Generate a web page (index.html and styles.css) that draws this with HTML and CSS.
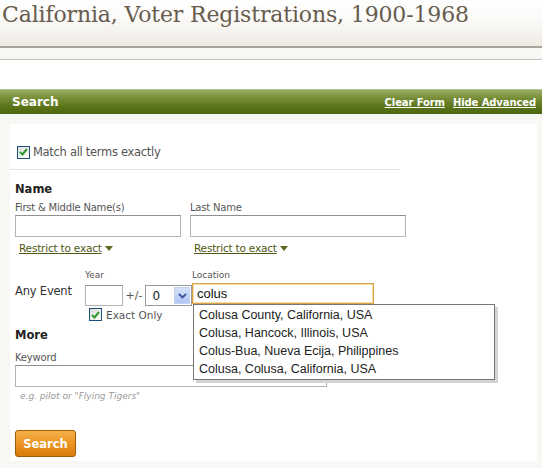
FILE: index.html
```html
<!DOCTYPE html>
<html>
<head>
<meta charset="utf-8">
<link rel="stylesheet" href="styles.css">
</head>
<body>
<div class="masthead">
  <h1 class="title">California, Voter Registrations, 1900-1968</h1>
</div>
<div class="substrip"></div>
<div class="bar">
  <span class="bar-title">Search</span>
  <span class="bar-links"><a href="#">Clear Form</a><a href="#">Hide Advanced</a></span>
</div>
<div class="panel">
  <div class="card">
    <label class="match"><span class="cb"><svg width="9" height="8" viewBox="0 0 9 8"><path d="M1 4 L3.5 6.5 L8 1" fill="none" stroke="#2f9a2f" stroke-width="2"/></svg></span>Match all terms exactly</label>
    <div class="rule"></div>

    <div class="heading">Name</div>
    <div class="name-grid">
      <div class="col col-first">
        <div class="lbl">First &amp; Middle Name(s)</div>
        <div class="input"></div>
        <a class="restrict" href="#">Restrict to exact</a><span class="tri"></span>
      </div>
      <div class="col col-last">
        <div class="lbl">Last Name</div>
        <div class="input"></div>
        <a class="restrict" href="#">Restrict to exact</a><span class="tri"></span>
      </div>
    </div>

    <div class="event">
      <div class="event-label">Any Event</div>
      <div class="year-block">
        <div class="small-lbl">Year</div>
        <div class="year-row">
          <div class="input year"></div>
          <span class="pm">+/-</span>
          <div class="select"><span class="sel-val">0</span><span class="sel-btn"><svg width="9" height="6" viewBox="0 0 9 6"><path d="M1 1 L4.5 4.5 L8 1" fill="none" stroke="#3b55a0" stroke-width="1.8"/></svg></span></div>
        </div>
        <label class="exact"><span class="cb"><svg width="9" height="8" viewBox="0 0 9 8"><path d="M1 4 L3.5 6.5 L8 1" fill="none" stroke="#2f9a2f" stroke-width="2"/></svg></span>Exact Only</label>
      </div>
      <div class="loc-block">
        <div class="small-lbl">Location</div>
        <div class="input loc">colus</div>
        <ul class="suggest">
          <li>Colusa County, California, USA</li>
          <li>Colusa, Hancock, Illinois, USA</li>
          <li>Colus-Bua, Nueva Ecija, Philippines</li>
          <li>Colusa, Colusa, California, USA</li>
        </ul>
      </div>
    </div>

    <div class="heading more">More</div>
    <div class="kw-row">
      <div class="kw-col">
        <div class="lbl">Keyword</div>
        <div class="input kw"></div>
        <div class="hint">e.g. pilot or "Flying Tigers"</div>
      </div>
      <div class="kw-side">Exact</div>
    </div>

    <button class="search-btn">Search</button>
  </div>
</div>
</body>
</html>
```

FILE: styles.css
```css
* { box-sizing: border-box; }
html, body { margin: 0; padding: 0; }
body {
  width: 542px;
  height: 469px;
  overflow: hidden;
  background: #ffffff;
  font-family: "DejaVu Sans", Verdana, sans-serif;
  color: #333;
}

.masthead {
  height: 48px;
  background: linear-gradient(to bottom, #ffffff 0%, #fbfaf8 40%, #efece5 100%);
  border-bottom: 2px solid #a9a398;
  padding: 3px 0 0 2px;
}
.title {
  margin: 0;
  font-family: "DejaVu Serif", "Liberation Serif", serif;
  font-weight: normal;
  font-size: 22px;
  line-height: 24px;
  color: #675c4e;
  letter-spacing: -0.15px;
}
.substrip {
  height: 12px;
  background: #f8f7f4;
  border-bottom: 1px solid #c9c5bc;
  margin-bottom: 29px;
}

.bar {
  height: 25px;
  background: linear-gradient(to bottom, #9aad66 0%, #768d36 35%, #5a7418 70%, #4d6610 100%);
  border-top: 1px solid #b4c28a;
  display: flex;
  align-items: center;
  justify-content: space-between;
  padding: 0 6px 0 12px;
}
.bar-title {
  color: #ffffff;
  font-family: "DejaVu Sans", Verdana, sans-serif;
  font-size: 12px;
  font-weight: bold;
}
.bar-links {
  display: flex;
  gap: 8px;
}
.bar-links a {
  color: #ffffff;
  font-size: 10px;
  font-weight: bold;
  text-decoration: underline;
  letter-spacing: -0.1px;
}

.panel {
  background: #f7f7f3;
  padding: 10px 5px 7px 10px;
}
.card {
  background: #ffffff;
  padding: 0 0 5px 5px;
  height: 337px;
  font-family: "DejaVu Sans", Verdana, sans-serif;
  font-size: 11px;
  color: #555;
}

.cb {
  display: inline-flex;
  align-items: center;
  justify-content: center;
  width: 13px;
  height: 13px;
  border: 1px solid #1c5180;
  background: linear-gradient(135deg, #dcdcd7, #ffffff);
  margin-right: 4px;
  vertical-align: middle;
}

.match {
  display: flex;
  align-items: center;
  padding-top: 18px;
  padding-left: 2px;
  height: 38px;
  font-size: 11.5px;
  color: #555;
  letter-spacing: -0.3px;
}
.match .cb { margin-right: 3px; }
.rule {
  margin: 7px 0 0 -5px;
  width: 390px;
  height: 1px;
  background: #e6e6de;
}

.heading {
  margin-top: 12px;
  font-size: 11.5px;
  line-height: 14px;
  font-weight: bold;
  color: #222;
}

.name-grid {
  display: grid;
  grid-template-columns: 166px 216px;
  column-gap: 9px;
  margin-top: 5px;
}
.lbl {
  font-size: 10px;
  line-height: 13px;
  color: #555;
  letter-spacing: -0.2px;
}
.input {
  height: 22px;
  border: 1px solid #b4b4b4;
  border-top-color: #8f8f8f;
  background: #fff;
  margin-top: 1px;
}
.restrict {
  display: inline-block;
  margin: 4px 0 0 4px;
  font-size: 10.5px;
  line-height: 14px;
  color: #4e5812;
  text-decoration: underline;
  letter-spacing: -0.2px;
}
.tri {
  display: inline-block;
  width: 0;
  height: 0;
  border-left: 4px solid transparent;
  border-right: 4px solid transparent;
  border-top: 5px solid #5d6a1c;
  margin-left: 3px;
  vertical-align: 1px;
}

.event {
  display: flex;
  margin-top: 14px;
  height: 55px;
}
.event-label {
  width: 70px;
  padding-top: 15px;
  font-size: 11.5px;
  color: #333;
  letter-spacing: -0.2px;
}
.small-lbl {
  font-size: 9px;
  line-height: 12px;
  color: #555;
}
.year-block { width: 107px; }
.year-row {
  display: flex;
  align-items: center;
  margin-top: 4px;
}
.input.year {
  width: 38px;
  height: 21px;
  margin-top: 0;
}
.pm {
  font-size: 11px;
  color: #555;
  margin: 0 3px 0 3px;
}
.select {
  width: 47px;
  height: 21px;
  border: 1px solid #9a9a9a;
  display: flex;
  align-items: center;
  justify-content: space-between;
  padding: 0 1px 0 6px;
  font-size: 12px;
  color: #222;
  background: #fff;
}
.sel-btn {
  width: 16px;
  height: 17px;
  background: linear-gradient(to bottom, #d6e2fb, #b1c6f2);
  border: 1px solid #c4d2ef;
  display: flex;
  align-items: center;
  justify-content: center;
}
.exact {
  display: flex;
  align-items: center;
  margin: 2px 0 0 4px;
  font-size: 10.5px;
  color: #555;
}
.exact .cb { margin-right: 4px; }

.loc-block {
  position: relative;
  width: 182px;
}
.input.loc {
  height: 21px;
  margin-top: 2px;
  border: 1px solid #d9a447;
  box-shadow: inset 0 0 0 1px #f3dcaa;
  padding: 2px 4px 0 4px;
  font-family: "Liberation Sans", Arial, sans-serif;
  font-size: 13px;
  color: #111;
}
.suggest {
  position: absolute;
  left: 1px;
  top: 35px;
  width: 302px;
  margin: 0;
  padding: 1px 0 1px 0;
  list-style: none;
  background: #fff;
  border: 1px solid #777;
  box-shadow: 3px 3px 0 #d3d3d3;
  z-index: 5;
}
.suggest li {
  font-family: "Liberation Sans", Arial, sans-serif;
  font-size: 12.5px;
  line-height: 18px;
  height: 18px;
  color: #222;
  padding-left: 5px;
}

.heading.more { margin-top: 4px; }
.kw-row {
  display: flex;
  margin-top: 9px;
}
.kw-col { width: 312px; }
.input.kw {
  width: 312px;
  height: 22px;
  margin-top: 1px;
}
.hint {
  margin: 4px 0 0 5px;
  font-size: 9px;
  font-style: italic;
  color: #999;
}
.kw-side {
  margin: 20px 0 0 31px;
  font-size: 10px;
  color: #666;
}

.search-btn {
  display: block;
  margin-top: 29px;
  width: 61px;
  height: 27px;
  border: 1px solid #a55a06;
  border-radius: 3px;
  background: linear-gradient(to bottom, #f4b148 0%, #ec9424 50%, #d97a0a 100%);
  color: #fff;
  font-family: "DejaVu Sans", Verdana, sans-serif;
  font-size: 11.5px;
  font-weight: bold;
  padding: 0;
}
```
